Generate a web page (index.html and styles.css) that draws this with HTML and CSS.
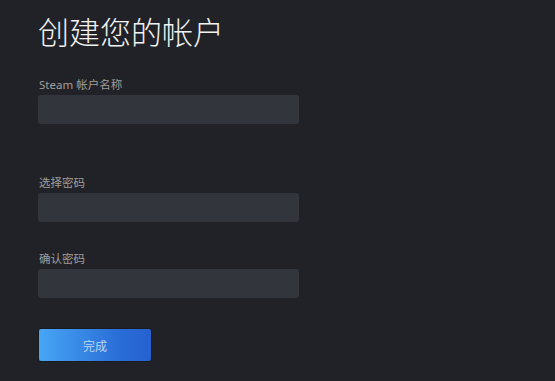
FILE: index.html
```html
<!DOCTYPE html>
<html lang="zh-CN">
<head>
<meta charset="utf-8">
<title>创建您的帐户</title>
<link rel="stylesheet" href="styles.css">
</head>
<body>
<main class="page">
  <h1 class="title">创建您的帐户</h1>
  <form class="form">
    <div class="field">
      <label class="label">Steam 帐户名称</label>
      <input class="input" type="text">
    </div>
    <div class="field field-gap">
      <label class="label">选择密码</label>
      <input class="input" type="password">
    </div>
    <div class="field field-gap2">
      <label class="label">确认密码</label>
      <input class="input" type="password">
    </div>
    <button class="btn" type="button">完成</button>
  </form>
</main>
</body>
</html>
```
FILE: styles.css
```css
html, body {
  margin: 0;
  padding: 0;
  background: #202227;
  height: 100%;
}
body {
  font-family: "Noto Sans", "Noto Sans CJK SC", sans-serif;
  color: #ffffff;
}
.page {
  padding: 8px 0 0 38px;
}
.title {
  margin: 0;
  font-size: 31px;
  line-height: 46px;
  font-weight: 300;
  color: #f2f2f2;
  font-family: "Noto Sans CJK SC", sans-serif;
}
.form {
  display: flex;
  flex-direction: column;
  margin-top: 24px;
  padding-left: 1px;
}
.field {
  display: flex;
  flex-direction: column;
  gap: 3px;
}
.field-gap { margin-top: 52px; }
.field-gap2 { margin-top: 30px; }
.label {
  font-size: 11.5px;
  line-height: 14px;
  color: #a09d9b;
}
.input {
  width: 261px;
  height: 29px;
  box-sizing: border-box;
  margin: 0;
  margin-left: -1px;
  border: none;
  border-radius: 3px;
  background: #32353c;
  outline: none;
}
.btn {
  margin-top: 31px;
  width: 112px;
  height: 32px;
  border: none;
  border-radius: 2px;
  background: linear-gradient(90deg, #47a6f5 0%, #2a6ed8 70%, #2561d0 100%);
  color: #b8d8f5;
  font-family: "Noto Sans CJK SC", sans-serif;
  font-size: 12px;
  cursor: pointer;
  box-shadow: 0 0 0 1px rgba(0,0,0,0.2);
}
```
